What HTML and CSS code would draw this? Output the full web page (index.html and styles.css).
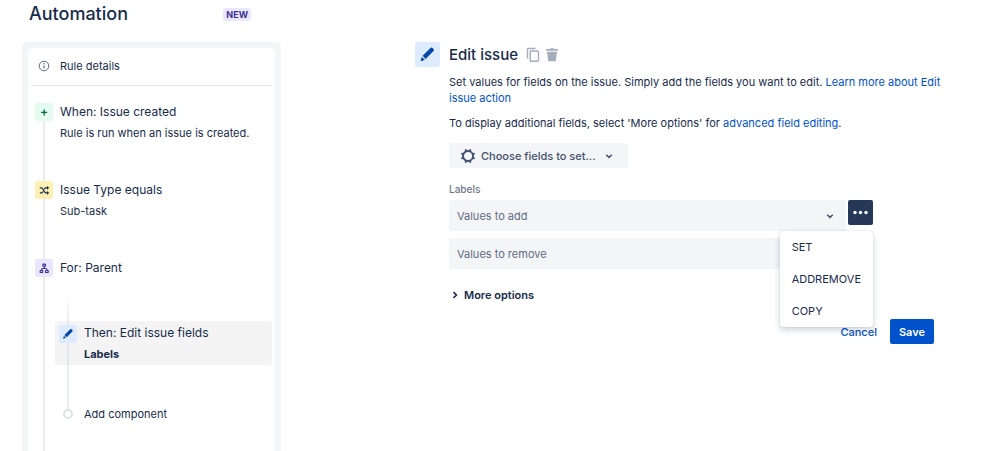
FILE: index.html
```html
<!DOCTYPE html>
<html lang="en">
<head>
<meta charset="utf-8">
<meta name="viewport" content="width=device-width, initial-scale=1">
<title>Automation</title>
<link rel="stylesheet" href="styles.css">
</head>
<body>
<div class="page">
  <aside class="sidebar">
    <header class="page-header">
      <h1>Automation</h1>
      <span class="lozenge">NEW</span>
    </header>
    <div class="rule-panel">
      <nav class="rule-card" aria-label="Rule">
        <a class="rule-details" href="#">
          <svg class="info-icon" viewBox="0 0 12 12" aria-hidden="true"><circle cx="6" cy="6" r="4.8" fill="none" stroke="currentColor"/><circle cx="6" cy="3.8" r=".7" fill="currentColor"/><path d="M6 5.4v3.1" stroke="currentColor" stroke-width="1.2"/></svg>
          <span>Rule details</span>
        </a>
        <ol class="steps">
          <li class="step">
            <div class="rail"><span class="tile tile-green"><svg viewBox="0 0 18 18" aria-hidden="true"><path d="M9.2 6.4v6M6.2 9.4h6" stroke="currentColor" stroke-width="1.3"/></svg></span></div>
            <div class="step-text"><h2>When: Issue created</h2><p>Rule is run when an issue is created.</p></div>
          </li>
          <li class="step">
            <div class="rail"><span class="tile tile-yellow"><svg viewBox="0 0 18 18" aria-hidden="true"><path d="M4.8 6.8h1.4q.8 0 1.3.7l2.2 3.6q.5.8 1.300.8h1.500M4.800 11.900h1.400q.8 0 1.200-.6l.5-.8M9.300 8.200l.5-.8q.4-.6 1.200-.6h1.500" fill="none" stroke="currentColor" stroke-width="1.200"/><path d="M12 4.900l2.200 1.900L12 8.700zM12 10l2.200 1.900-2.200 1.900z" fill="currentColor"/></svg></span></div>
            <div class="step-text"><h2>Issue Type equals</h2><p>Sub-task</p></div>
          </li>
          <li class="step step-branch">
            <div class="rail"><span class="tile tile-purple"><svg viewBox="0 0 18 18" aria-hidden="true"><g fill="none" stroke="currentColor" stroke-width="1.200"><path d="M9.200 7.500V9.500M6.500 11.500V10.800q0-1.300 1.300-1.300h2.800q1.300 0 1.300 1.300v.7"/><rect x="7.900" y="5.200" width="2.600" height="2" rx=".6"/><rect x="5.200" y="11.500" width="2.600" height="2" rx=".6"/><rect x="10.600" y="11.500" width="2.600" height="2" rx=".6"/></g></svg></span></div>
            <div class="branch">
              <div class="step-text"><h2>For: Parent</h2></div>
              <span class="lead-line"></span>
              <div class="selected-step">
                <div class="sub-rail"><span class="tile tile-blue"><svg viewBox="0 0 25 25" aria-hidden="true"><path d="M7.600 13.800l7.600-7.600c.9-.9 1.900-.8 2.900.2s1.100 2 .2 2.900l-7.600 7.600zM6.900 14.900l2.900 2.900-3 1.100c-.8.200-1.200-.2-1-1z" fill="currentColor"/></svg></span></div>
                <div><h2>Then: Edit issue fields</h2><p><strong>Labels</strong></p></div>
              </div>
              <span class="link-line"></span>
              <a class="add-step" href="#"><span class="node"></span>Add component</a>
            </div>
          </li>
        </ol>
      </nav>
    </div>
  </aside>

  <main class="editor">
    <span class="tile tile-blue tile-large"><svg viewBox="0 0 25 25" aria-hidden="true"><path d="M7.600 13.800l7.600-7.600c.9-.9 1.900-.8 2.900.2s1.100 2 .2 2.900l-7.600 7.600zM6.900 14.900l2.900 2.900-3 1.100c-.8.200-1.200-.2-1-1z" fill="currentColor"/></svg></span>
    <div class="editor-body">
      <header class="editor-header">
        <h2>Edit issue</h2>
        <button type="button" aria-label="Duplicate"><svg viewBox="0 0 14 16" aria-hidden="true"><path d="M1.500 11.500V2.500q0-1 1-1H9.500" fill="none" stroke="currentColor" stroke-width="1.400"/><rect x="4.200" y="4" width="8.300" height="10.300" rx="1" fill="none" stroke="currentColor" stroke-width="1.400"/></svg></button>
        <button type="button" aria-label="Delete"><svg viewBox="0 0 14 16" aria-hidden="true"><path d="M1 3.700v-1c0-.5.300-.7.700-.7H5l.6-.8h2.800L9 2h3.300c.4 0 .7.200.7.700v1zM2 4.700h10L10.900 13.400c-.1.600-.4.900-1 .9H4.100c-.6 0-.9-.3-1-.9z" fill="currentColor"/></svg></button>
      </header>
      <p>Set values for fields on the issue. Simply add the fields you want to edit. <a href="#">Learn more about Edit issue action</a></p>
      <p>To display additional fields, select 'More options' for <a href="#">advanced field editing</a>.</p>
      <button type="button" class="choose">
        <svg class="gear" viewBox="0 0 16 16" aria-hidden="true"><g fill="none" stroke="currentColor"><circle cx="8" cy="8" r="5" stroke-width="1.900"/><path d="M5.500 1.200l.6 2M10.500 1.200l-.6 2M5.500 14.800l.6-2M10.500 14.800l-.6-2M1.200 5.500l2 .6M1.200 10.500l2-.6M14.800 5.500l-2 .6M14.800 10.500l-2-.6" stroke-width="1.800"/></g></svg>
        Choose fields to set...
        <svg class="chevron" viewBox="0 0 10 10" aria-hidden="true"><path d="M2.200 3.800L5 6.400l2.800-2.600" fill="none" stroke="currentColor" stroke-width="1.500"/></svg>
      </button>
      <form class="fields">
        <label for="add">Labels</label>
        <div class="field-row">
          <div class="values">
            <div class="combo">
              <input id="add" type="text" placeholder="Values to add">
              <svg class="chevron" viewBox="0 0 10 10" aria-hidden="true"><path d="M2.200 3.800L5 6.400l2.800-2.600" fill="none" stroke="currentColor" stroke-width="1.500"/></svg>
            </div>
            <div class="combo">
              <input id="remove" type="text" placeholder="Values to remove" aria-label="Values to remove">
            </div>
          </div>
          <div class="menu-anchor">
            <button type="button" class="dots" aria-label="Field actions" aria-expanded="true"><svg viewBox="0 0 25 25" aria-hidden="true"><g fill="currentColor"><circle cx="7" cy="12.500" r="1.700"/><circle cx="12.500" cy="12.500" r="1.700"/><circle cx="18" cy="12.500" r="1.700"/></g></svg></button>
            <div class="menu">
              <button type="button">SET</button>
              <button type="button">ADDREMOVE</button>
              <button type="button">COPY</button>
            </div>
          </div>
        </div>
        <button type="button" class="more"><svg class="chevron" viewBox="0 0 10 10" aria-hidden="true"><path d="M3.500 2.200L6.400 5 3.500 7.800" fill="none" stroke="currentColor" stroke-width="1.600"/></svg>More options</button>
        <div class="actions">
          <button type="button" class="cancel">Cancel</button>
          <button type="submit" class="save">Save</button>
        </div>
      </form>
    </div>
  </main>
</div>
</body>
</html>
```
FILE: styles.css
```css
* { box-sizing: border-box; }

body {
  margin: 0;
  color: #172b4d;
  background: #fff;
  font: 11px/16px Inter, "Liberation Sans", sans-serif;
}

h1, h2, p, ol { margin: 0; padding: 0; }
ol { list-style: none; }
h2 { font-size: 12px; font-weight: 400; line-height: 18px; }
a { color: #0052cc; text-decoration: none; }
svg { display: block; }

button {
  border: 0;
  padding: 0;
  background: none;
  color: inherit;
  font: inherit;
  cursor: pointer;
}

.page {
  display: grid;
  grid-template-columns: 259px minmax(0, 1fr);
  gap: 134px;
  min-height: 100vh;
  padding: 0 65px 0 22px;
}

/* Sidebar */
.sidebar { display: flex; flex-direction: column; }

.page-header {
  display: flex;
  align-items: center;
  justify-content: space-between;
  height: 42px;
  padding: 0 30px 14px 7px;
}

h1 { font-size: 18px; font-weight: 500; line-height: 28px; }

.lozenge {
  padding: 0 3px;
  border-radius: 3px;
  background: #eae6ff;
  color: #403294;
  font-size: 9px;
  font-weight: 700;
  line-height: 13px;
}

.rule-panel {
  display: flex;
  flex: 1;
  padding: 6px 6px 0;
  border-radius: 5px 5px 0 0;
  background: #f4f5f7;
}

.rule-card {
  display: flex;
  flex: 1;
  flex-direction: column;
  padding: 0 3px;
  border-radius: 5px 5px 0 0;
  background: #fff;
}

.rule-details {
  display: flex;
  align-items: center;
  gap: 10px;
  height: 38px;
  padding: 0 7px 2px;
  border-bottom: 1px solid #dfe1e9;
  color: inherit;
}

.info-icon { width: 12px; height: 12px; color: #5e6c84; }

.steps {
  display: flex;
  flex: 1;
  flex-direction: column;
  padding: 17px 0 0 4px;
}

.step {
  display: grid;
  grid-template-columns: 18px minmax(0, 1fr);
  gap: 2px;
  min-height: 78px;
}

.step-branch { flex: 1; }

.rail {
  background: linear-gradient(#ebecf0, #ebecf0) center / 2px 100% no-repeat;
}

.tile {
  display: block;
  width: 18px;
  height: 18px;
  border-radius: 2px;
}

.tile-green { background: #e3fcef; color: #006644; }
.tile-yellow { background: #fff0b3; color: #172b4d; }
.tile-purple { background: #eae6ff; color: #403294; }
.tile-blue { background: #deebff; color: #0747a6; }
.tile-large { width: 25px; height: 25px; }

.step-text { padding-left: 5px; }
.step p, .selected-step p { margin-top: 4px; }

.lead-line, .link-line {
  display: block;
  width: 2px;
  margin-left: 12px;
}

.lead-line {
  height: 28px;
  margin-top: 16px;
  background: linear-gradient(#fff, #ebecf0);
}

.link-line { height: 44px; background: #ebecf0; }

.selected-step {
  display: grid;
  grid-template-columns: 18px minmax(0, 1fr);
  gap: 7px;
  padding: 0 4px;
  border-radius: 3px;
  background: #f4f4f4;
}

.selected-step > div { padding: 3px 0; }

.selected-step .sub-rail {
  padding: 4px 0 0;
  background: linear-gradient(#e6e7eb, #e6e7eb) center / 2px 100% no-repeat;
}

.add-step {
  display: flex;
  align-items: center;
  gap: 11px;
  height: 10px;
  padding-left: 8px;
  color: inherit;
}

.node {
  width: 10px;
  height: 10px;
  border: 2px solid #dfe1e6;
  border-radius: 50%;
}

/* Editor */
.editor {
  display: grid;
  grid-template-columns: 25px minmax(0, 1fr);
  align-items: start;
  gap: 9px;
  padding-top: 42px;
}

.editor-header {
  display: flex;
  align-items: center;
  gap: 5px;
  height: 25px;
  margin-bottom: 7px;
}

.editor-header h2 {
  margin-right: 3px;
  font-size: 15px;
  font-weight: 500;
}

.editor-header button { color: #a5adba; }
.editor-header svg { width: 14px; height: 16px; }
.editor-body > p { margin: 0 -12px 9px 0; }

.chevron { width: 10px; height: 10px; }

.choose {
  display: flex;
  align-items: center;
  gap: 5px;
  height: 25px;
  margin-top: 12px;
  padding: 0 14px 0 11px;
  border-radius: 2px;
  background: #f4f5f7;
  color: #42526e;
  font-weight: 500;
}

.choose .chevron { margin-left: 3px; }
.gear { width: 16px; height: 16px; }

.fields { margin-top: 14px; }

label {
  display: block;
  color: #6b778c;
  font-size: 10px;
  font-weight: 500;
  line-height: 14px;
}

.field-row {
  display: flex;
  gap: 2px;
  margin-top: 4px;
  padding-right: 61px;
}

.values {
  display: grid;
  flex: 1;
  gap: 7px;
}

.combo {
  display: flex;
  align-items: center;
  height: 31px;
  padding: 0 11px 0 8px;
  border-radius: 2px;
  background: #f4f5f7;
  color: #42526e;
}

.combo input {
  flex: 1;
  min-width: 0;
  padding: 0;
  border: 0;
  outline: 0;
  background: none;
  color: #172b4d;
  font: inherit;
}

.combo input::placeholder { color: #5e6c84; opacity: 1; }

.menu-anchor { position: relative; }

.dots {
  display: block;
  width: 25px;
  height: 25px;
  border-radius: 2px;
  background: #253858;
  color: #fff;
}

.menu {
  position: absolute;
  top: 31px;
  right: 0;
  z-index: 1;
  border-radius: 3px;
  background: #fff;
  box-shadow: 0 3px 6px rgba(9, 30, 66, .2), 0 0 1px rgba(9, 30, 66, .3);
}

.menu button {
  display: block;
  width: 100%;
  height: 32px;
  padding: 0 12px;
  text-align: left;
}

.more {
  display: flex;
  align-items: center;
  gap: 4px;
  margin-top: 18px;
  padding-left: 1px;
  font-weight: 600;
}

.actions {
  display: flex;
  justify-content: flex-end;
  gap: 13px;
  margin-top: 16px;
}

.cancel { color: #0052cc; font-weight: 500; }

.save {
  height: 25px;
  padding: 0 9px;
  border-radius: 2px;
  background: #0052cc;
  color: #fff;
  font-weight: 600;
}
```
